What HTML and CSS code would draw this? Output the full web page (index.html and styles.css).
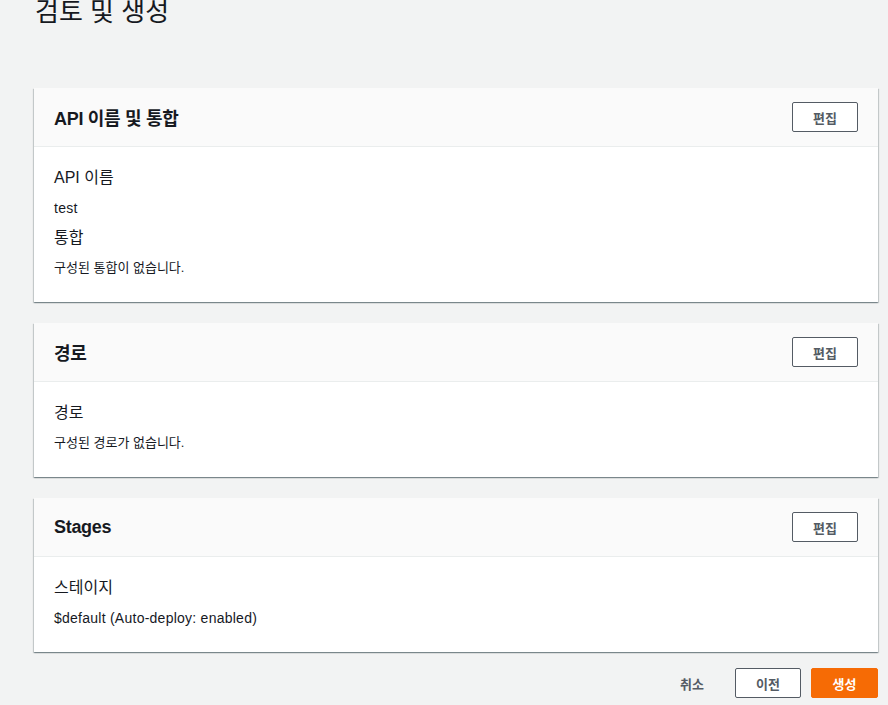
FILE: index.html
```html
<!DOCTYPE html>
<html lang="ko">
<head>
    <meta charset="UTF-8">
    <meta name="viewport" content="width=device-width, initial-scale=1.0">
    <title>검토 및 생성</title>
    <link rel="stylesheet" href="styles.css">
</head>
<body>
    <div class="page">
        <h1 class="page-title">검토 및 생성</h1>

        <div class="card">
            <div class="card-header">
                <h2>API 이름 및 통합</h2>
                <button class="btn">편집</button>
            </div>
            <div class="card-body">
                <div class="label">API 이름</div>
                <div class="value">test</div>
                <div class="label next">통합</div>
                <div class="value small">구성된 통합이 없습니다.</div>
            </div>
        </div>

        <div class="card">
            <div class="card-header">
                <h2>경로</h2>
                <button class="btn">편집</button>
            </div>
            <div class="card-body">
                <div class="label">경로</div>
                <div class="value small">구성된 경로가 없습니다.</div>
            </div>
        </div>

        <div class="card">
            <div class="card-header">
                <h2>Stages</h2>
                <button class="btn">편집</button>
            </div>
            <div class="card-body">
                <div class="label">스테이지</div>
                <div class="value">$default (Auto-deploy: enabled)</div>
            </div>
        </div>

        <div class="actions">
            <button class="btn link">취소</button>
            <button class="btn">이전</button>
            <button class="btn primary">생성</button>
        </div>
    </div>
</body>
</html>
```

FILE: styles.css
```css
body {
    margin: 0;
    padding: 0;
    background-color: #f2f3f3;
    color: #16191f;
    font-family: "Liberation Sans", "Noto Sans CJK KR", sans-serif;
}
.page {
    padding: 0 10px 0 34px;
}
.page-title {
    margin: -8px 0 0 1px;
    font-size: 26px;
    font-weight: 400;
    line-height: 40px;
    height: 96px;
}
.card {
    background: #fff;
    margin-bottom: 21px;
    box-shadow: 0 1px 1px 0 rgba(0, 28, 36, 0.3), 1px 1px 1px 0 rgba(0, 28, 36, 0.15), -1px 1px 1px 0 rgba(0, 28, 36, 0.15);
}
.card-header {
    display: flex;
    align-items: center;
    justify-content: space-between;
    height: 58px;
    padding: 0 20px;
    background: #fafafa;
    border-bottom: 1px solid #eaeded;
}
.card-header h2 {
    margin: 0;
    font-size: 18px;
    font-weight: 700;
    letter-spacing: -0.3px;
}
.card-body {
    padding: 21px 20px 24px;
}
.label {
    font-size: 16px;
    line-height: 20px;
}
.label.next {
    margin-top: 10px;
}
.value {
    margin-top: 10px;
    font-size: 14px;
    line-height: 20px;
    letter-spacing: 0.25px;
}
.value.small {
    font-size: 13px;
    letter-spacing: 0;
}
.btn {
    width: 66px;
    height: 30px;
    padding: 0;
    font-family: inherit;
    font-size: 13px;
    font-weight: 700;
    color: #545b64;
    background: #fff;
    border: 1px solid #545b64;
    border-radius: 2px;
    cursor: pointer;
}
.actions {
    display: flex;
    justify-content: flex-end;
    gap: 10px;
    margin-top: -5px;
}
.btn.link {
    border-color: transparent;
    background: transparent;
}
.btn.primary {
    width: 67px;
    background: #f66b05;
    border-color: #f66b05;
    color: #fff;
}
```
